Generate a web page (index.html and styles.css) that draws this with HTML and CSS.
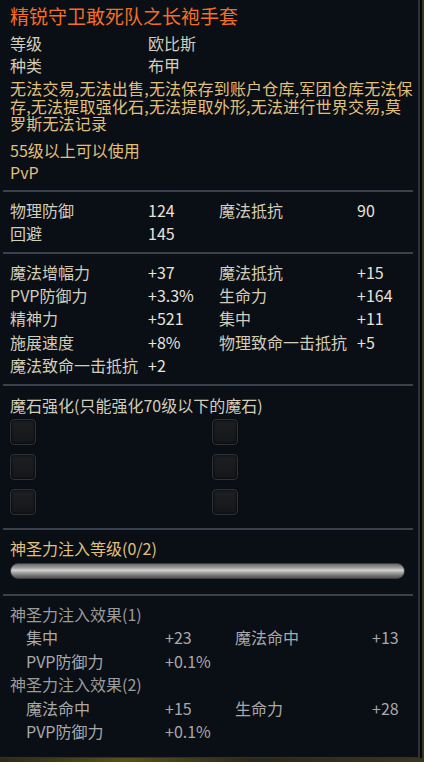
FILE: index.html
```html
<!DOCTYPE html>
<html lang="zh-CN">
<head>
    <meta charset="UTF-8">
    <title>精锐守卫敢死队之长袍手套</title>
    <link rel="stylesheet" href="styles.css">
</head>
<body>
<div class="panel">
    <div class="sec head">
        <h1 class="title">精锐守卫敢死队之长袍手套</h1>
        <div class="kv"><span>等级</span><span>欧比斯</span></div>
        <div class="kv"><span>种类</span><span>布甲</span></div>
        <p class="limit">无法交易,无法出售,无法保存到账户仓库,军团仓库无法保存,无法提取强化石,无法提取外形,无法进行世界交易,莫罗斯无法记录</p>
        <p class="gold">55级以上可以使用</p>
        <p class="gold">PvP</p>
    </div>
    <div class="sec">
        <div class="stats">
            <span>物理防御</span><span class="v">124</span><span>魔法抵抗</span><span class="v">90</span>
            <span>回避</span><span class="v">145</span>
        </div>
    </div>
    <div class="sec">
        <div class="stats">
            <span>魔法增幅力</span><span class="v">+37</span><span>魔法抵抗</span><span class="v">+15</span>
            <span>PVP防御力</span><span class="v">+3.3%</span><span>生命力</span><span class="v">+164</span>
            <span>精神力</span><span class="v">+521</span><span>集中</span><span class="v">+11</span>
            <span>施展速度</span><span class="v">+8%</span><span>物理致命一击抵抗</span><span class="v">+5</span>
            <span>魔法致命一击抵抗</span><span class="v">+2</span>
        </div>
    </div>
    <div class="sec">
        <p class="sub">魔石强化(只能强化70级以下的魔石)</p>
        <div class="sockets">
            <i class="slot"></i><i class="slot"></i>
            <i class="slot"></i><i class="slot"></i>
            <i class="slot"></i><i class="slot"></i>
        </div>
    </div>
    <div class="sec">
        <p class="gold">神圣力注入等级(0/2)</p>
        <div class="bar"></div>
    </div>
    <div class="sec effects">
        <p class="eff-title">神圣力注入效果(1)</p>
        <div class="stats eff">
            <span>集中</span><span>+23</span><span>魔法命中</span><span>+13</span>
            <span>PVP防御力</span><span>+0.1%</span>
        </div>
        <p class="eff-title">神圣力注入效果(2)</p>
        <div class="stats eff">
            <span>魔法命中</span><span>+15</span><span>生命力</span><span>+28</span>
            <span>PVP防御力</span><span>+0.1%</span>
        </div>
    </div>
</div>
</body>
</html>
```

FILE: styles.css
```css
*{
    margin: 0;
    padding: 0;
    box-sizing: border-box;
}
body{
    width: 424px;
    height: 762px;
    overflow: hidden;
    background: linear-gradient(90deg, #2c2a16, #5a4f1c 30%, #2a2818 60%, #3b3520);
    font-family: "Noto Sans CJK SC", "Noto Sans", sans-serif;
    font-size: 16px;
    color: #d3cdb9;
}
.panel{
    width: 420px;
    height: 758px;
    background: #0a0e15;
    border-right: 2px solid #2b323b;
    border-bottom: 1px solid #2b323b;
    box-shadow: 2px 0 0 #05070a;
    padding-left: 3px;
    padding-right: 5px;
}
.sec{
    border-bottom: 2px solid #3a414d;
    padding: 7px 0 7px 7px;
}
.head{
    padding-top: 4px;
}
.title{
    font-size: 19px;
    font-weight: normal;
    line-height: 24px;
    color: #f36f26;
    margin-bottom: 4px;
}
.kv{
    display: grid;
    grid-template-columns: 138px 1fr;
    line-height: 22px;
}
.limit{
    color: #e1c07b;
    line-height: 17.5px;
    margin-top: 4px;
    margin-bottom: 6px;
    letter-spacing: 0.2px;
}
.gold{
    color: #e1c07b;
    line-height: 22px;
}
.stats{
    display: grid;
    grid-template-columns: 138px 71px 138px 1fr;
    line-height: 23.2px;
    white-space: nowrap;
}
.stats .v{
    color: #e6e3d8;
}
.sub{
    line-height: 22px;
    margin-top: 1px;
}
.sockets{
    display: grid;
    grid-template-columns: 202px 26px;
    row-gap: 9px;
    padding: 3px 0 6px;
}
.slot{
    display: block;
    width: 26px;
    height: 26px;
    border-radius: 4px;
    background: linear-gradient(#1d1f22, #141619);
    border: 1px solid #2f3338;
    box-shadow: inset 0 0 3px #000, 0 0 1px #000;
}
.bar{
    width: 395px;
    height: 16px;
    margin: 4px 0 8px;
    border-radius: 8px;
    border: 1px solid #3e3e3e;
    background: linear-gradient(#6a6a6a, #9a9a9a 25%, #d2d2d2 45%, #a8a8a8 60%, #6e6e6e 85%, #555 100%);
}
.sec.effects{
    border-bottom: none;
    padding-top: 7px;
}
.eff-title{
    color: #9b9b9b;
    line-height: 23.4px;
}
.eff{
    grid-template-columns: 139px 70px 137px 1fr;
    padding-left: 16px;
    line-height: 23.4px;
    color: #a9a9a9;
}
```
